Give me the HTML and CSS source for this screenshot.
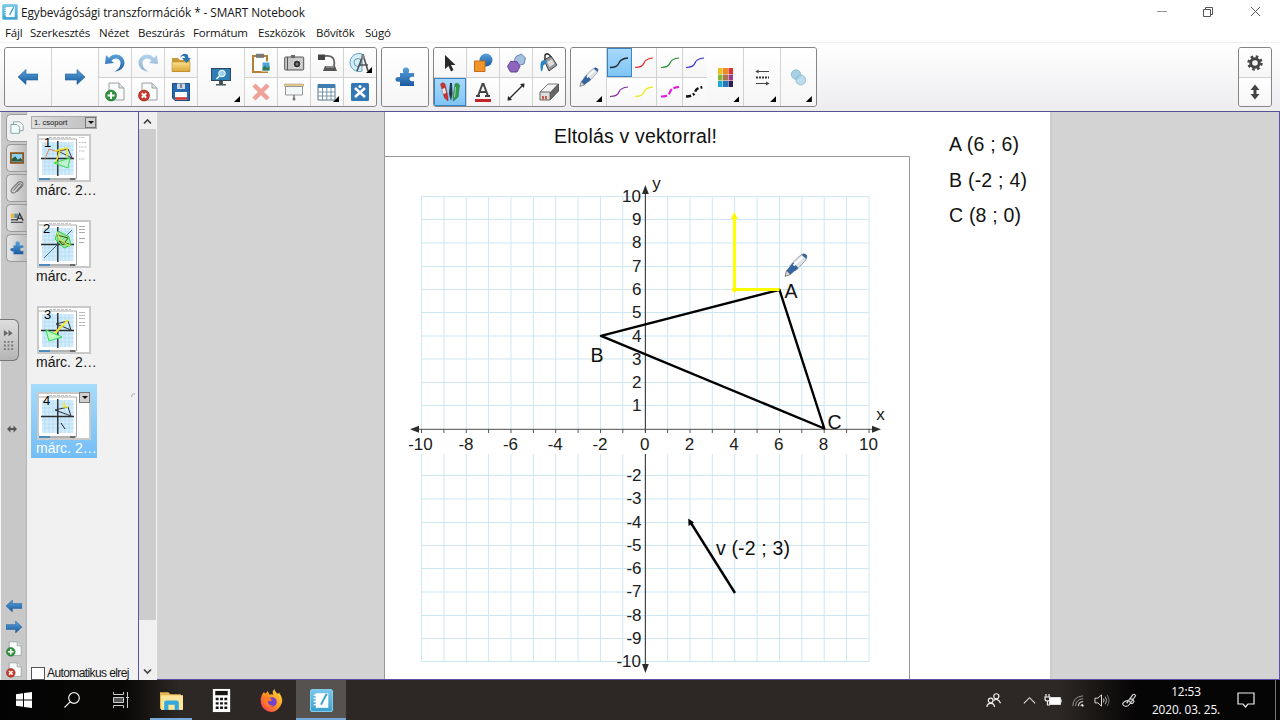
FILE: index.html
```html
<!DOCTYPE html>
<html lang="hu">
<head>
<meta charset="utf-8">
<title>Egybevágósági transzformációk * - SMART Notebook</title>
<link rel="stylesheet" href="styles.css">
</head>
<body>
<svg class="defs" width="0" height="0" aria-hidden="true">
  <defs>
    <linearGradient id="blue" x1="0" y1="0" x2="0" y2="1"><stop offset="0" stop-color="#5aa2dc"/><stop offset="1" stop-color="#1a5a9e"/></linearGradient>
    <linearGradient id="gold" x1="0" y1="0" x2="0" y2="1"><stop offset="0" stop-color="#fbe08a"/><stop offset="1" stop-color="#dba63a"/></linearGradient>
    <linearGradient id="sky" x1="0" y1="0" x2="0" y2="1"><stop offset="0" stop-color="#7cc8ea"/><stop offset="1" stop-color="#3a9fd0"/></linearGradient>
    <linearGradient id="fire" x1="1" y1="0" x2="0" y2="1"><stop offset="0" stop-color="#ffe23c"/><stop offset=".5" stop-color="#ff9322"/><stop offset="1" stop-color="#f52b5c"/></linearGradient>
    <symbol id="arrow-left" viewBox="0 0 20 16"><path d="M0 8 8 .5V5H20V11H8V15.5Z" fill="url(#blue)" stroke="#1f5f9f" stroke-width=".6"/></symbol>
    <symbol id="arrow-right" viewBox="0 0 20 16"><path d="M20 8 12 .5V5H0V11H12V15.5Z" fill="url(#blue)" stroke="#1f5f9f" stroke-width=".6"/></symbol>
    <symbol id="undo" viewBox="0 0 20 20"><path d="M1 2 0 11 9 10 6.400 7.600C10 3.500 16 5.500 15.500 11 15 15 12.500 17 9.500 18.700 16 18 19.500 14 19.500 9.500 19 2 9-1.500 4 5Z" fill="url(#blue)"/></symbol>
    <symbol id="page-blank" viewBox="0 0 20 20"><path d="M4 1H14L19 6V18H4Z" fill="#f9fbfb" stroke="#97a0a2"/><path d="M14 1V6H19" fill="#dde3e4" stroke="#97a0a2"/></symbol>
    <symbol id="page-add" viewBox="0 0 20 20"><use href="#page-blank"/><circle cx="6" cy="13.500" r="5.500" fill="#2e9440" stroke="#1c6b2c" stroke-width=".6"/><path d="M6 10V17M2.500 13.500H9.500" stroke="#fff" stroke-width="2"/></symbol>
    <symbol id="page-del" viewBox="0 0 20 20"><use href="#page-blank"/><circle cx="6" cy="13.500" r="5.500" fill="#c9392b" stroke="#8f2118" stroke-width=".6"/><path d="M3.800 11.300 8.200 15.700M8.200 11.300 3.800 15.700" stroke="#fff" stroke-width="2"/></symbol>
    <symbol id="puzzle" viewBox="0 0 20 20"><path d="M5 6H8.500C7 3 8 .5 11 .5S15 3 13.500 6H19V10C16 9 14.500 10.500 14.500 12S16 15 19 14V19H5V14.500C2 15.500 .5 14 .5 12.300S2 9.500 5 10.300Z" fill="url(#blue)"/></symbol>
    <symbol id="pen" viewBox="0 0 24 24"><path d="M15.500 3 19.500 .8 23 3 21.800 7 11.500 18 6 12.500Z" fill="#dde3e6" stroke="#7b8794" stroke-width=".7"/><path d="M17.500 1.800 19.500 .8Q22.500 .5 23 3L22.300 6Z" fill="#3b6498"/><path d="M9 9.500 14.500 15 6.500 21.500 2.600 17.500Z" fill="#3464a2"/><path d="M2.600 17.500 6.500 21.500 1 23.300Z" fill="#d8d8d8" stroke="#555" stroke-width=".7"/><path d="M9.500 12.500 18.500 4" stroke="#fff" stroke-width="2"/></symbol>
    <symbol id="curve" viewBox="0 0 20 12"><path d="M1 10.500C6 10.500 9 9 10 6S13 1.500 19 1" fill="none" stroke="currentColor"/></symbol>
    <symbol id="notebook" viewBox="0 0 22 22"><rect x=".5" y=".5" width="21" height="21" rx="2" fill="url(#sky)" stroke="#80ccec"/><path d="M5.500 4H17.500V18H5.500Z" fill="#fff"/><path d="M3.500 6H7M3.500 9H7M3.500 12H7M3.500 15H7" stroke="#fff" stroke-width="1.300"/><path d="M16 4.500 10.500 15" stroke="#3c9cc9" stroke-width="1.800"/></symbol>
    <symbol id="plane" viewBox="0 0 54 48"><path d="M1 1H53V47H1Z" fill="#fff" stroke="#c9c9c9" stroke-width="2"/><path d="M2 5H39.500V45" fill="none" stroke="#aaa"/><path d="M12 3.500H34" stroke="#aaa" stroke-width=".7" stroke-dasharray="3 1"/><path d="M5 8H36.500V41H5Z" fill="#d3ecfb"/><path d="M8 8V41M12 8V41M16 8V41M20 8V41M24 8V41M28 8V41M32 8V41M5 12H37M5 16H37M5 20H37M5 28H37M5 32H37M5 36H37" stroke="#a9d8f3" stroke-width=".6"/><path d="M2 45H39" stroke="#999" stroke-width="1.500"/><path d="M2 45H13" stroke="#287fbd" stroke-width="1.500"/><path d="M33 45H38" stroke="#444" stroke-width="1.300"/><path d="M4 24.500H37M20.800 7V42" stroke="#282c30" stroke-width="1.400"/></symbol>
  </defs>
</svg>

<div class="window">
  <header class="titlebar">
    <svg class="app-icon" viewBox="0 0 22 22"><use href="#notebook"/></svg>
    <span class="window-title">Egybevágósági transzformációk * - SMART Notebook</span>
    <svg class="window-buttons" viewBox="0 0 110 20" fill="none" stroke="#555"><path d="M2 9.500H12" stroke="#999"/><path d="M48.500 7.500H55.500V14.500H48.500ZM50.500 7.500V5.500H57.500V12.500H55.500"/><path d="M96 5 105 14M105 5 96 14"/></svg>
  </header>
  <nav class="menubar"><span>Fájl</span><span>Szerkesztés</span><span>Nézet</span><span>Beszúrás</span><span>Formátum</span><span>Eszközök</span><span>Bővítők</span><span>Súgó</span></nav>

  <div class="toolbar">
    <div class="group group-main">
      <div class="cell tall col-1"><svg class="i-arrow"><use href="#arrow-left"/></svg></div>
      <div class="cell tall col-2"><svg class="i-arrow"><use href="#arrow-right"/></svg></div>
      <div class="cell"><svg class="i20"><use href="#undo"/></svg></div>
      <div class="cell"><svg class="i20 flip faded"><use href="#undo"/></svg></div>
      <div class="cell"><svg class="i20" viewBox="0 0 20 20"><path d="M1 5H7L9 7H19V19H1Z" fill="#c99b38"/><path d="M1 9H19V18.500H1Z" fill="url(#gold)" stroke="#b98a2b" stroke-width=".6"/><path d="M9 5C11-1 18 0 17.500 5H20L15.500 10 11 5H14C14 3 12 2 9 5Z" fill="#2d74b5"/></svg></div>
      <div class="cell tall col-6"><svg class="i20" viewBox="0 0 20 20"><rect x=".5" y="1.500" width="19" height="12" fill="#2e7fb5" stroke="#30485a"/><path d="M8 14H12V17H15V18.500H5V17H8Z" fill="#45545f"/><circle cx="11" cy="6.500" r="3.300" fill="#9dd1ed" stroke="#fff"/><path d="M8.500 9 5.500 12" stroke="#fff" stroke-width="1.500"/></svg><i class="corner"></i></div>
      <div class="cell"><svg class="i20" viewBox="0 0 20 20"><rect x="2" y="3" width="14" height="16" fill="#fff" stroke="#b68032" stroke-width="2"/><rect x="5" y=".8" width="8" height="4" fill="#777"/><rect x="11" y="9" width="8" height="9" fill="#4ca4d6" stroke="#fff"/><path d="M11.500 17.500V15L14 12.500 16 15 18.500 13V17.500Z" fill="#2d7b4e"/></svg></div>
      <div class="cell"><svg class="i20" viewBox="0 0 20 20"><rect x=".7" y="4" width="19" height="13" rx="1" fill="#c9c9c9" stroke="#555"/><path d="M3.500 4V17" stroke="#555"/><path d="M7 2H11V5H7Z" fill="#666"/><circle cx="13" cy="11" r="4" fill="#333" stroke="#eee"/><circle cx="13" cy="11" r="1.500" fill="#777"/></svg></div>
      <div class="cell"><svg class="i20" viewBox="0 0 20 20"><path d="M1 1.500H8V7H1Z" fill="#444"/><path d="M8 3C17 2 18 7 17 14" fill="none" stroke="#666" stroke-width="1.800"/><path d="M8 13H18L20 18H6Z" fill="#555"/><path d="M9 14H17" stroke="#bbb"/></svg></div>
      <div class="cell"><svg class="i20" viewBox="0 0 20 20"><path d="M12 1A9 9 0 1 0 12 18Z" fill="#d5edf7" stroke="#5a9cbb"/><circle cx="8" cy="9.500" r="4" fill="none" stroke="#5a9cbb"/><path d="M13 1V5M12 5 7 18M14 5 18 18M9 12H18" stroke="#555" stroke-width="1.700"/><circle cx="13" cy="4" r="2" fill="#888"/></svg><i class="corner"></i></div>
      <div class="cell"><svg class="i20"><use href="#page-add"/></svg></div>
      <div class="cell"><svg class="i20"><use href="#page-del"/></svg></div>
      <div class="cell"><svg class="i20" viewBox="0 0 20 20"><path d="M1.500 1.500H18.500V18.500H4L1.500 16Z" fill="#2769b0" stroke="#174c87"/><path d="M6 1.500H14V7H6Z" fill="#cdd7df"/><path d="M10 2V6" stroke="#235"/><path d="M4 10H16V18H4Z" fill="#fff"/><path d="M4 16.500H16" stroke="#cf3029" stroke-width="2.500"/></svg></div>
      <div class="cell"><svg class="i20 muted" viewBox="0 0 20 20"><path d="M3 3 17 17M17 3 3 17" stroke="#e57465" stroke-width="4.500"/></svg></div>
      <div class="cell"><svg class="i20" viewBox="0 0 20 20"><path d="M.5 2H19.500V4.500H.5Z" fill="#e6c684" stroke="#aaa08d" stroke-width=".6"/><path d="M1.500 4.500H18.500V13H1.500Z" fill="#f3f6f7" stroke="#999"/><path d="M10 13V18" stroke="#777" stroke-width="1.500"/><circle cx="10" cy="17" r="1.500" fill="#777"/></svg></div>
      <div class="cell"><svg class="i20" viewBox="0 0 20 20"><path d="M1 2.500H18V18H1Z" fill="#fff" stroke="#5c7487"/><path d="M1 2H18V6H1Z" fill="#3f7db0"/><path d="M1 10H18M1 14H18M5.500 6V18M9.800 6V18M14 6V18" stroke="#7894a8"/></svg><i class="corner"></i></div>
      <div class="cell"><svg class="i20" viewBox="0 0 20 20"><rect x="1" y="1" width="18" height="18" rx="1.500" fill="#3178b5"/><path d="M5 6 15 15M15 6 5 15" stroke="#fff" stroke-width="2.600"/><circle cx="10" cy="4.500" r="1.600" fill="#fff"/></svg></div>
    </div>

    <div class="group group-addon"><div class="cell"><svg class="i20"><use href="#puzzle"/></svg></div></div>

    <div class="group group-tools">
      <div class="cell"><svg class="i20" viewBox="0 0 20 20"><path d="M5 2V16L8.500 13 11 18.500 13.500 17 11 12H15.500Z" fill="#292929"/></svg></div>
      <div class="cell"><svg class="i20" viewBox="0 0 20 20"><circle cx="13" cy="7" r="6.500" fill="url(#blue)"/><path d="M1.500 8H12V18.500H1.500Z" fill="#f3942b" stroke="#c16c17"/></svg></div>
      <div class="cell"><svg class="i20" viewBox="0 0 20 20"><path d="M10 3.500 15.500 1 19.500 5 18 11 12 12.500 8 8Z" fill="#a5bfe0" stroke="#6787ae"/><path d="M4.500 8.500H11L14 13.500 11 19H4.500L1.500 13.500Z" fill="#8d65bd" stroke="#68459b"/></svg></div>
      <div class="cell"><svg class="i20" viewBox="0 0 20 20"><path d="M5 7 12 3 18 12 10 18Z" fill="#929799" stroke="#444"/><path d="M8 9 13 6 15.500 11 10.500 14Z" fill="#ddd"/><path d="M6 7V2Q9-1 12 4" fill="none" stroke="#333" stroke-width="1.500"/><path d="M6 7C1 7 1 11 2 18Q4 19 4 13L8 9Z" fill="#2885c6"/></svg></div>
      <div class="cell active"><svg class="i20" viewBox="0 0 20 20"><path d="M.5 2Q3-.5 5 2L8 15V19L4.500 16Z" fill="#cd3030" stroke="#893030" stroke-width=".5"/><path d="M2 7 5 6 6 11 3.500 12Z" fill="#eee"/><path d="M10 1H12L12.500 12 11 19 9 12Z" fill="#26384b"/><path d="M15 2Q18 0 19.500 3L18 15 13.500 19 13 15Z" fill="#2f9b4b" stroke="#206b36" stroke-width=".5"/><path d="M15.500 5 14.500 15" stroke="#a8dbad"/></svg></div>
      <div class="cell"><svg class="i20" viewBox="0 0 20 20"><path d="M3 14H7M12 14H17M5 14 9.500 2H10.500L15 14M7 10H13" fill="none" stroke="#444" stroke-width="2"/><path d="M2 17H18V20H2Z" fill="#c4242c"/></svg></div>
      <div class="cell"><svg class="i20" viewBox="0 0 20 20"><path d="M3 17 17 3" stroke="#222" stroke-width="1.300"/><path d="M1.500 18.500 2 14 6 18ZM18.500 1.500 14 2 18 6Z" fill="#222"/></svg></div>
      <div class="cell"><svg class="i20" viewBox="0 0 20 20"><path d="M1 10 9 2H19.500L11 11Z" fill="#f4f4f4" stroke="#777"/><path d="M11 11 19.500 2V9L11 18Z" fill="#666" stroke="#555"/><path d="M1 10H11V18H1Z" fill="#ddd" stroke="#666"/><path d="M4 14V17.500M7 14V17.500" stroke="#c64638" stroke-width="1.700"/></svg></div>
    </div>

    <div class="group group-pens">
      <div class="cell tall col-1"><svg class="i-pen"><use href="#pen"/></svg><i class="corner"></i></div>
      <div class="cell active"><svg class="i-curve black"><use href="#curve"/></svg></div>
      <div class="cell"><svg class="i-curve red"><use href="#curve"/></svg></div>
      <div class="cell"><svg class="i-curve green"><use href="#curve"/></svg></div>
      <div class="cell"><svg class="i-curve blue"><use href="#curve"/></svg></div>
      <div class="cell tall col-6"><svg class="i-palette" viewBox="0 0 15 19"><path d="M0 0H4.500V6H0Z" fill="#f0be20"/><path d="M5 0H10V6H5Z" fill="#f08a25"/><path d="M10.500 0H15V6H10.500Z" fill="#dc342e"/><path d="M0 6.500H4.500V12.500H0Z" fill="#84b83b"/><path d="M5 6.500H10V12.500H5Z" fill="#ad714b"/><path d="M10.500 6.500H15V12.500H10.500Z" fill="#9b3d85"/><path d="M0 13H4.500V19H0Z" fill="#20a9d2"/><path d="M5 13H10V19H5Z" fill="#2875b8"/><path d="M10.500 13H15V19H10.500Z" fill="#27215b"/></svg><i class="corner"></i></div>
      <div class="cell tall col-7"><svg class="i-palette" viewBox="0 0 15 19"><path d="M1 3.500H14M1 15.500H14" stroke="#444" stroke-width="1.200"/><path d="M1 9.500H14" stroke="#333" stroke-width="2" stroke-dasharray="2 1"/><path d="M3.500 1.500V5.500L.5 3.500ZM11 13.500V17.500L14.500 15.500Z" fill="#444"/></svg><i class="corner"></i></div>
      <div class="cell tall col-8"><svg class="i-palette" viewBox="0 0 15 19"><circle cx="5" cy="6.500" r="4.700" fill="#a9d1e4" stroke="#7daec8" stroke-width=".7"/><circle cx="9.800" cy="12" r="4.900" fill="#a9d1e4" fill-opacity=".75" stroke="#7daec8" stroke-width=".7"/></svg><i class="corner"></i></div>
      <div class="cell"><svg class="i-curve purple"><use href="#curve"/></svg></div>
      <div class="cell"><svg class="i-curve yellow"><use href="#curve"/></svg></div>
      <div class="cell"><svg class="i-curve magenta"><use href="#curve"/></svg></div>
      <div class="cell"><svg class="i-curve dotted"><use href="#curve"/></svg></div>
    </div>

    <div class="group group-settings">
      <div class="cell"><svg class="i-gear" viewBox="0 0 16 16"><circle cx="8" cy="8" r="4.300" fill="none" stroke="#444" stroke-width="3"/><circle cx="8" cy="8" r="6.500" fill="none" stroke="#444" stroke-width="2.400" stroke-dasharray="2.550 2.550"/></svg></div>
      <div class="cell"><svg class="i-gear" viewBox="0 0 16 16"><path d="M8 .5 12.500 6H9.500V10H12.500L8 15.500 3.500 10H6.500V6H3.500Z" fill="#444"/></svg></div>
    </div>
  </div>

  <main class="workspace">
    <aside class="tabs">
      <div class="tab tab-on"><svg viewBox="0 0 16 16"><path d="M4 1H11L15 5V11H4Z" fill="#fff" stroke="#779b9b"/><path d="M1 4H8L11 7V14H1Z" fill="#f4ffff" stroke="#779b9b"/></svg></div>
      <div class="tab"><svg viewBox="0 0 16 16"><path d="M1 2.500H15V13.500H1Z" fill="#8bd0ee" stroke="#8a541d" stroke-width="2"/><path d="M2 12V9L6 6 9 10 12 8 14 10V12Z" fill="#2c5940"/></svg></div>
      <div class="tab"><svg viewBox="0 0 16 16"><path d="M4 11 10 4C12 2 14 4 12.500 6L6 13C3 15 0 12 2 9L9 2C12-1 17 2 14 6L8 12" fill="none" stroke="#777" stroke-width="1.300"/></svg></div>
      <div class="tab"><svg viewBox="0 0 16 16"><path d="M1 3H5V8H1Z" fill="#e8b53b"/><path d="M5 3H9V8H5Z" fill="#588dad"/><path d="M1 10H8M1 13H15" stroke="#555" stroke-width="1.500"/><path d="M8 11 11 3 15 11M9.500 8.500H13.500" fill="none" stroke="#333" stroke-width="1.500"/></svg></div>
      <div class="tab"><svg viewBox="0 0 20 20"><use href="#puzzle"/></svg></div>
      <svg class="resize" viewBox="0 0 10 8"><path d="M0 4 3.500 .5V3H6.500V.5L10 4 6.500 7.500V5H3.500V7.500Z" fill="#555"/></svg>
      <div class="page-actions">
        <svg viewBox="0 0 20 16"><use href="#arrow-left"/></svg>
        <svg viewBox="0 0 20 16"><use href="#arrow-right"/></svg>
        <svg viewBox="0 0 20 20"><use href="#page-add"/></svg>
        <svg viewBox="0 0 20 20"><use href="#page-del"/></svg>
      </div>
      <div class="handle"><svg viewBox="0 0 12 24"><path d="M1 1V8L5.500 4.500ZM6 1V8L10.500 4.500Z" fill="#666"/><path d="M1 14H11M1 18H11M1 22H11" stroke="#777" stroke-width="2" stroke-dasharray="2 2"/></svg></div>
    </aside>

    <section class="pages">
      <div class="group-select"><span>1. csoport</span><i class="drop"></i></div>
      <div class="page"><svg viewBox="0 0 54 48"><use href="#plane"/><path d="M42 3.500H48M42 8.500H49M42 13H50M42 17H48M42 25H48" stroke="#bbb" stroke-dasharray="1 .5"/><path d="M8 25 12 15 21 18 31 15" fill="none" stroke="#df8857"/><path d="M21 17 35 24 31 15Z" fill="none" stroke="#444"/><path d="M18 17 30 14V23M18 30 23 17" fill="none" stroke="#ece52e" stroke-width="1.500"/><path d="M17 29 33 24 31 34Z" fill="#baf7b5" fill-opacity=".6" stroke="#33dc4d"/><text x="7" y="13">1</text></svg><span>márc. 2…</span></div>
      <div class="page"><svg viewBox="0 0 54 48"><use href="#plane"/><path d="M42 6.500H48M42 9.500H48M42 12.500H48M42 18.500H48M42 22.500H47" stroke="#aaa"/><path d="M7 38 35 10" stroke="#46769a"/><path d="M21 11 32 17 34 25 27 28 18 19Z" fill="#8ceb82" fill-opacity=".8" stroke="#33cb45"/><path d="M20 15 31 18 26 25 22 21 32 24" fill="none" stroke="#464d1e"/><path d="M20 12 23 20 33 26" fill="none" stroke="#e8ed35"/><text x="6" y="13">2</text></svg><span>márc. 2…</span></div>
      <div class="page"><svg viewBox="0 0 54 48"><use href="#plane"/><path d="M42 6.500H48M42 9.500H48M42 12.500H48M42 16.500H48M42 19.500H48" stroke="#aaa" stroke-width=".8"/><path d="M19 18 31 15 34 24Z" fill="none" stroke="#333"/><path d="M12 34 21 24 31 14" stroke="#f3e92c" stroke-width="2"/><path d="M9 24 25 31 12 35Z" fill="#bcffc0" stroke="#30df57"/><text x="7" y="13">3</text></svg><span>márc. 2…</span></div>
      <div class="page selected"><svg viewBox="0 0 54 48"><use href="#plane"/><path d="M18 18 31 15 34 24Z" fill="none" stroke="#333"/><path d="M27 10V15H31" fill="none" stroke="#f3e92c" stroke-width="1.500"/><path d="M24 31 28 37" stroke="#222"/><text x="6" y="13">4</text></svg><span>márc. 2…</span><i class="drop page-menu"></i></div>
      <svg class="busy" viewBox="0 0 6 6"><path d="M1 5Q0 1 5 1" fill="none" stroke="#999"/></svg>
      <label class="autohide"><i class="checkbox"></i><span>Automatikus elrej</span></label>
    </section>

    <div class="scrollbar">
      <svg viewBox="0 0 17 17"><path d="M5 11.500 8.500 8 12 11.500" fill="none" stroke="#444" stroke-width="1.700"/></svg>
      <div class="thumb"></div>
      <svg viewBox="0 0 17 17"><path d="M5 6.500 8.500 10 12 6.500" fill="none" stroke="#444" stroke-width="1.700"/></svg>
    </div>

    <section class="canvas">
      <svg class="board" viewBox="384 112 668 567">
        <rect x="384" y="112" width="668" height="567" fill="#fff"/>
        <path d="M384.500 112V679M384 156.500H909.500V679M1051 112V679" fill="none" stroke="#989898"/>
        <g fill="none" stroke="#cde8f3" stroke-width="1">
          <path d="M421.500 196V429M443.900 196V429M466.300 196V429M488.600 196V429M511 196V429M533.400 196V429M555.700 196V429M578.100 196V429M600.500 196V429M622.800 196V429M667.600 196V429M690 196V429M712.300 196V429M734.700 196V429M757.100 196V429M779.500 196V429M801.800 196V429M824.200 196V429M846.600 196V429M869 196V429"/>
          <path d="M421.500 454V662M443.900 454V662M466.300 454V662M488.600 454V662M511 454V662M533.400 454V662M555.700 454V662M578.100 454V662M600.500 454V662M622.800 454V662M667.600 454V662M690 454V662M712.300 454V662M734.700 454V662M757.100 454V662M779.500 454V662M801.800 454V662M824.200 454V662M846.600 454V662M869 454V662"/>
          <path d="M421 196.500H869M421 219.500H869M421 243H869M421 266.500H869M421 289.500H869M421 312.500H869M421 336H869M421 359H869M421 382.500H869M421 405.500H869M421 475.500H869M421 499H869M421 522.500H869M421 545.500H869M421 568.500H869M421 592H869M421 615.500H869M421 638.500H869M421 661.500H869"/>
        </g>
        <path d="M418 429.300H875" stroke="#707070" stroke-width="1.200"/>
        <path d="M645.400 190V433M645.400 454V667" stroke="#444" stroke-width="1.200"/>
        <path d="M421.500 429V433M443.900 429V433M466.300 429V433M488.600 429V433M511 429V433M533.400 429V433M555.700 429V433M578.100 429V433M600.500 429V433M622.800 429V433M667.600 429V433M690 429V433M712.300 429V433M734.700 429V433M757.100 429V433M779.500 429V433M801.800 429V433M824.200 429V433M846.600 429V433M869 429V433" stroke="#555"/>
        <path d="M410 429.200 419 425.700V432.700ZM881 429.200 872 425.700V432.700ZM645.400 185 642 194H648.800ZM645.400 673 642 664H648.800Z" fill="#2d2d2d"/>
        <g class="axis-label end">
          <text x="641" y="202">10</text><text x="641.500" y="225">9</text><text x="641.500" y="248.400">8</text><text x="641.500" y="271.800">7</text><text x="641.500" y="295">6</text><text x="641.500" y="318.200">5</text><text x="641.500" y="341.500">4</text><text x="641.500" y="364.600">3</text><text x="641.500" y="388">2</text><text x="641.500" y="411.200">1</text>
          <text x="641.500" y="481.200">-2</text><text x="641.500" y="504.400">-3</text><text x="641.500" y="527.800">-4</text><text x="641.500" y="551">-5</text><text x="641.500" y="574">-6</text><text x="641.500" y="597.400">-7</text><text x="641.500" y="620.500">-8</text><text x="641.500" y="644">-9</text><text x="641" y="667">-10</text>
        </g>
        <g class="axis-label middle">
          <text x="420.500" y="450.300">-10</text><text x="466" y="450.300">-8</text><text x="510.500" y="450.300">-6</text><text x="555.200" y="450.300">-4</text><text x="600" y="450.300">-2</text><text x="644.800" y="450.300">0</text><text x="689.500" y="450.300">2</text><text x="734" y="450.300">4</text><text x="778.700" y="450.300">6</text><text x="823.500" y="450.300">8</text><text x="868.500" y="450.300">10</text>
          <text x="656.500" y="189.300">y</text><text x="880.500" y="420">x</text>
        </g>
        <path d="M601 335.800 779.500 289.800 824.300 428.500Z" fill="none" stroke="#000" stroke-width="2.400" stroke-linejoin="round"/>
        <path d="M779.500 289.500H734.500V216" fill="none" stroke="#ffff00" stroke-width="3"/>
        <path d="M734.300 212 730.800 219H737.800ZM734.500 286.500 731 289.500 734.500 293 738 289.500Z" fill="#fff700"/>
        <path d="M735 593 691 523" stroke="#000" stroke-width="2.400"/>
        <path d="M688.300 518.600 694 522.500 688.500 526Z" fill="#000"/>
        <g class="note">
          <text x="554" y="142.700" textLength="163">Eltolás v vektorral!</text>
          <text x="949" y="151.400" textLength="70">A (6 ; 6)</text>
          <text x="949" y="186.900" textLength="78">B (-2 ; 4)</text>
          <text x="949" y="222.400" textLength="72">C (8 ; 0)</text>
          <text x="716" y="555.400" textLength="74">v (-2 ; 3)</text>
          <text x="784.500" y="298.300">A</text><text x="590.500" y="362.200">B</text><text x="827.500" y="429">C</text>
        </g>
        <use href="#pen" x="784" y="253" width="24" height="24"/>
      </svg>
    </section>
  </main>

  <footer class="taskbar">
    <div class="task-apps">
      <div class="task"><svg viewBox="0 0 16 16"><path d="M0 2.300 7 1.200V7.500H0ZM8 1 16 0V7.500H8ZM0 8.500H7V14.800L0 13.700ZM8 8.500H16V16L8 15Z" fill="#fff"/></svg></div>
      <div class="task"><svg viewBox="0 0 16 16" fill="none" stroke="#eee" stroke-width="1.200"><circle cx="10" cy="6" r="5.300"/><path d="M6.300 9.700.5 15.500"/></svg></div>
      <div class="task"><svg viewBox="0 0 16 16" fill="none" stroke="#ccc"><path d="M.5 0V2.500H10.500V0M.5 16V13.500H10.500V16M14.500 0V16M13 5.500H16"/><path d="M.5 5.500H10.500V10.500H.5Z" fill="#555"/></svg></div>
      <div class="task open"><svg class="task-lg" viewBox="0 0 22 20"><path d="M0 2H8L10 4H20V18H0Z" fill="#e7b64f"/><path d="M1 5H22V19H1Z" fill="#ffe599"/><path d="M4 19V12Q4 10 6 10H16Q18 10 18 12V19H14V14H8V19Z" fill="#35a8dc"/></svg></div>
      <div class="task"><svg class="task-lg" viewBox="0 0 20 26"><path d="M1 1H19V25H1Z" fill="#fff"/><path d="M3.500 3H16.500V7.500H3.500Z" fill="#171412"/><path d="M4 11.500H16M4 16H16M4 20.500H16" stroke="#171412" stroke-width="2.500" stroke-dasharray="3 1.500"/></svg></div>
      <div class="task"><svg class="task-lg" viewBox="0 0 24 24"><path d="M2 6 4 3 6 5 8 2 10 6Q12 5 14 6 12 3 15 0 16 4 19 5L20 4Q24 10 23 14 20 23 12 24 3 23 1 15 0 10 2 6Z" fill="url(#fire)"/><circle cx="12.500" cy="13.500" r="5" fill="#7542cb"/><path d="M4 7 10 9 13 12 8 13Q9 18 14 17 7 22 4 13Z" fill="#ff7b26"/></svg></div>
      <div class="task open current"><svg class="task-lg"><use href="#notebook"/></svg></div>
    </div>
    <div class="tray">
      <svg viewBox="0 0 16 16" fill="none" stroke="#eee" stroke-width="1.300"><circle cx="11" cy="3.500" r="2.700"/><circle cx="5" cy="8" r="2.500"/><path d="M1 15Q1 11 5 11T9 15M8 8Q10 6.500 12 7T15.500 11"/></svg>
      <svg viewBox="0 0 16 16" fill="none" stroke="#ddd" stroke-width="1.200"><path d="M2 11 8 5 14 11"/></svg>
      <svg class="battery" viewBox="0 0 17 14"><path d="M4.500 4.500H15.500V11.500H4.500Z" fill="#fff" stroke="#ddd"/><path d="M16 6.500V9.500M1 1V4M4 1V4M0 4H5V6Q5 8 2.500 8T0 6ZM2.500 8V12H5" fill="none" stroke="#eee" stroke-width="1.200"/></svg>
      <svg viewBox="0 0 16 16" fill="none"><path d="M3 14Q3 4 14 3M6 14Q6 7 14 6" stroke="#999"/><path d="M9 14Q9 9.500 14 9M11.500 14Q12 12 14 12" stroke="#ccc" stroke-width="1.200"/><circle cx="13.500" cy="13.500" r="1" fill="#fff"/></svg>
      <svg viewBox="0 0 16 16" fill="none" stroke="#e8e8e8"><path d="M1 5.500H4L8 2V14L4 10.500H1ZM10 6Q11.500 8 10 10"/><path d="M12 4Q15 8 12 12" stroke="#bbb"/><path d="M14 2Q18 8 14 14" stroke="#777"/></svg>
      <svg class="ink" viewBox="0 0 16 16" fill="none" stroke="#ddd" stroke-width="1.200"><path d="M5 11 11 2.500Q13 0 14.500 3L8 12Q5 15.500 2 13.500T3 9Q7 7 9 10T12 10Q14 9 11 6.500H9"/></svg>
      <div class="clock"><span>12:53</span><span>2020. 03. 25.</span></div>
      <svg class="notify" viewBox="0 0 18 18" fill="none" stroke="#eee" stroke-width="1.200"><path d="M1 2H17V13H11L8.500 16 6 13H1Z"/></svg>
      <i class="show-desktop"></i>
    </div>
  </footer>
</div>
</body>
</html>
```
FILE: styles.css
```css
* { box-sizing: border-box; }
body { margin: 0; background: #fff; color: #151515; font-family: "Open Sans", "Noto Sans", sans-serif; overflow: hidden; }
svg { display: block; flex: none; overflow: visible; }
.defs { position: absolute; }
.window { width: 1280px; height: 720px; display: grid; grid-template-rows: 24px 18px 69px 569px 40px; }

.titlebar { display: flex; align-items: center; padding-left: 2px; font-size: 12px; }
.app-icon { width: 16px; height: 16px; margin-right: 3px; }
.window-title { width: 284px; margin-top: -1px; white-space: nowrap; font-size: 11.8px; letter-spacing: -0.08px; }
.window-buttons { width: 110px; height: 20px; margin-left: 850px; }
.menubar { display: grid; grid-template-columns: 25px 69px 39px 55px 65px 58px 49px 40px; padding-left: 5px; font-size: 11.5px; line-height: 18px; letter-spacing: -0.2px; white-space: nowrap; }

.toolbar { display: flex; align-items: flex-start; gap: 4px; padding: 4px 8px 0 4px; background: linear-gradient(#fff, #ededf0); border-top: 1px solid #f0f0f0; }
.group { display: grid; height: 60px; grid-template-rows: 29px 28px; background: #d2d2d2; border: 1px solid #858585; border-radius: 3px; overflow: hidden; column-gap: 1px; row-gap: 1px; }
.group-main { grid-template-columns: 46px 46px 32px 32px 32px 46px repeat(4, 32px); width: 373px; }
.group-addon { width: 48px; grid-template-rows: 58px; }
.group-tools { width: 133px; grid-template-columns: repeat(4, 32px); }
.group-pens { width: 247px; grid-template-columns: 35px 25px 24px 25px 24px 36px 36px 35px; column-gap: .7px; }
.group-settings { width: 34px; margin-left: auto; }
.group-main, .group-tools, .group-pens, .group-settings { grid-template-rows: 29px 28px; }
.cell { position: relative; display: flex; align-items: center; justify-content: center; background: linear-gradient(#fff, #f6f6f7); }
.tall { grid-row: 1 / 3; }
.col-1 { grid-column: 1; }
.col-2 { grid-column: 2; }
.col-6 { grid-column: 6; }
.col-7 { grid-column: 7; }
.col-8 { grid-column: 8; }
.cell.active { background: linear-gradient(#a9d9fb, #7ec4f5); box-shadow: inset 0 0 0 1px #3984c6; }
.corner { position: absolute; right: 4px; bottom: 4px; width: 6px; height: 6px; background: #000; clip-path: polygon(100% 0, 100% 100%, 0 100%); }
.i20 { width: 20px; height: 20px; }
.i-arrow { width: 20px; height: 16px; }
.i-pen { width: 20px; height: 22px; }
.i-curve { width: 20px; height: 12px; }
.i-palette { width: 15px; height: 19px; }
.i-gear { width: 16px; height: 16px; }
.flip { transform: scaleX(-1); }
.faded { opacity: .45; }
.muted { opacity: .65; }
.black { color: #202a32; stroke-width: 1.3; }
.red { color: #e22b2b; stroke-width: 1.2; }
.green { color: #218b34; stroke-width: 1.2; }
.blue { color: #3830d3; stroke-width: 1.2; }
.purple { color: #8c2ba0; stroke-width: 1.2; }
.yellow { color: #eded35; stroke-width: 1.5; }
.magenta { color: #e617e0; stroke-width: 2.2; stroke-dasharray: 6 2; }
.dotted { color: #111; stroke-width: 2.5; stroke-dasharray: 5 2 2 2; }

.workspace { display: grid; grid-template-columns: 27px 111px 19px 1123px; min-height: 0; border-top: 1px solid #57538f; background: #d3d3d3; }
.tabs { position: relative; display: flex; flex-direction: column; gap: 2px; padding: 2px 0 0 5px; background: #c8c8c8; border-left: 1px solid #f5f5f5; border-right: 1px solid #b5b5b5; }
.tab { width: 21px; height: 28px; display: flex; align-items: center; justify-content: center; border: 1px solid #999; border-right: 0; border-radius: 5px 0 0 5px; background: linear-gradient(90deg, #e6e6e6, #bcbcbc); }
.tab svg { width: 14px; height: 14px; }
.tab-on { background: #f1f1f1; }
.resize { width: 10px; height: 8px; margin: 161px 0 0 1px; }
.page-actions { margin-top: auto; display: grid; grid-template-rows: repeat(4, 21.5px); place-items: center start; height: 85px; }
.page-actions svg { width: 16px; height: 14px; }
.page-actions svg:nth-child(n + 3) { width: 16px; height: 16px; }
.handle { position: absolute; left: -1px; top: 207px; width: 19px; height: 42px; display: flex; align-items: center; padding-left: 3px; border: 1px solid #777; border-left: 0; border-radius: 0 6px 6px 0; background: linear-gradient(#ddd, #b5b5b5); }
.handle svg { width: 11px; height: 24px; }

.pages { position: relative; display: flex; flex-direction: column; background: #f1f1f1; padding: 4px 0 0 4px; }
.group-select { width: 66px; height: 13px; display: flex; align-items: center; justify-content: space-between; padding-left: 2px; background: linear-gradient(90deg, #dedede, #bdbdbd); border: 1px solid #aaa; font: 7.6px/11px "Liberation Sans", sans-serif; }
.drop { width: 11px; height: 11px; display: flex; align-items: center; justify-content: center; background: #cfcfcf; border: 1px solid #777; }
.drop::before { content: ""; border: 3px solid transparent; border-top-color: #111; border-bottom: 0; }
.page { position: relative; width: 66px; height: 74px; margin-bottom: 12px; padding: 8px 0 0 6px; font: 14px/17px "Liberation Sans", sans-serif; }
.group-select + .page { margin-top: -3px; }
.page > svg { width: 54px; height: 48px; }
.page text { font-size: 13px; fill: #000; }
.page > span { display: block; margin-left: -1px; white-space: nowrap; letter-spacing: 0; }
.selected { background: linear-gradient(#a6dcfb, #73bdf7); color: #fff; }
.page-menu { position: absolute; right: 7px; top: 8px; width: 11px; height: 11px; }
.busy { position: absolute; left: 104px; top: 281px; width: 5px; height: 5px; }
.autohide { display: flex; align-items: center; gap: 2px; margin-top: auto; height: 14px; font: 12px/13px "Liberation Sans", sans-serif; white-space: nowrap; }
.checkbox { width: 14px; height: 13px; background: #fff; border: 1px solid #555; }
.autohide span { width: 82px; letter-spacing: -.6px; }
.scrollbar { display: flex; flex-direction: column; justify-content: space-between; background: #f0f0f0; border-left: 1px solid #5b53a0; border-right: 1px solid #f5f5f5; }
.scrollbar svg { width: 17px; height: 17px; }
.scrollbar .thumb { height: 491px; margin-bottom: auto; background: #cdcdcd; }
.canvas { padding-left: 227px; border-right: 1px solid #5a50b3; border-bottom: 1px solid #5a50a8; }
.board { width: 668px; height: 567px; }
.axis-label { font: 17px "Liberation Sans", Arial, sans-serif; fill: #202020; }
.end { text-anchor: end; }
.middle { text-anchor: middle; }
.note { font: 19.5px "Liberation Sans", Arial, sans-serif; fill: #111; }

.taskbar { display: flex; justify-content: space-between; background: linear-gradient(90deg, #030303 0, #090807 125px, #2d2825 180px, #2d2825 1060px, #060505 1135px, #050505); color: #fff; }
.task-apps { display: grid; grid-template-columns: 48px 48px 50px 50px 50px 50px 50px; }
.task { display: flex; align-items: center; justify-content: center; height: 40px; }
.task svg { width: 16px; height: 16px; }
.task .task-lg { width: 23px; height: 25px; }
.task.open { margin: 0 4px; box-shadow: inset 0 -2px #76a9db; }
.task.current { margin: 0; background: #56524f; box-shadow: inset 0 -2px #76a9db; }
.tray { display: grid; grid-template-columns: 36px 36px 12px 36px 12px 44px 70px 50px 9px; align-items: center; justify-items: center; }
.tray svg { width: 15px; height: 15px; }
.tray .battery { width: 17px; height: 14px; }
.tray .notify { width: 18px; height: 18px; }
.clock { display: grid; grid-template-rows: 18px 18px; justify-items: center; font-size: 11.8px; line-height: 18px; letter-spacing: -.1px; white-space: nowrap; }
.show-desktop { width: 1px; height: 40px; background: #777; }
```
